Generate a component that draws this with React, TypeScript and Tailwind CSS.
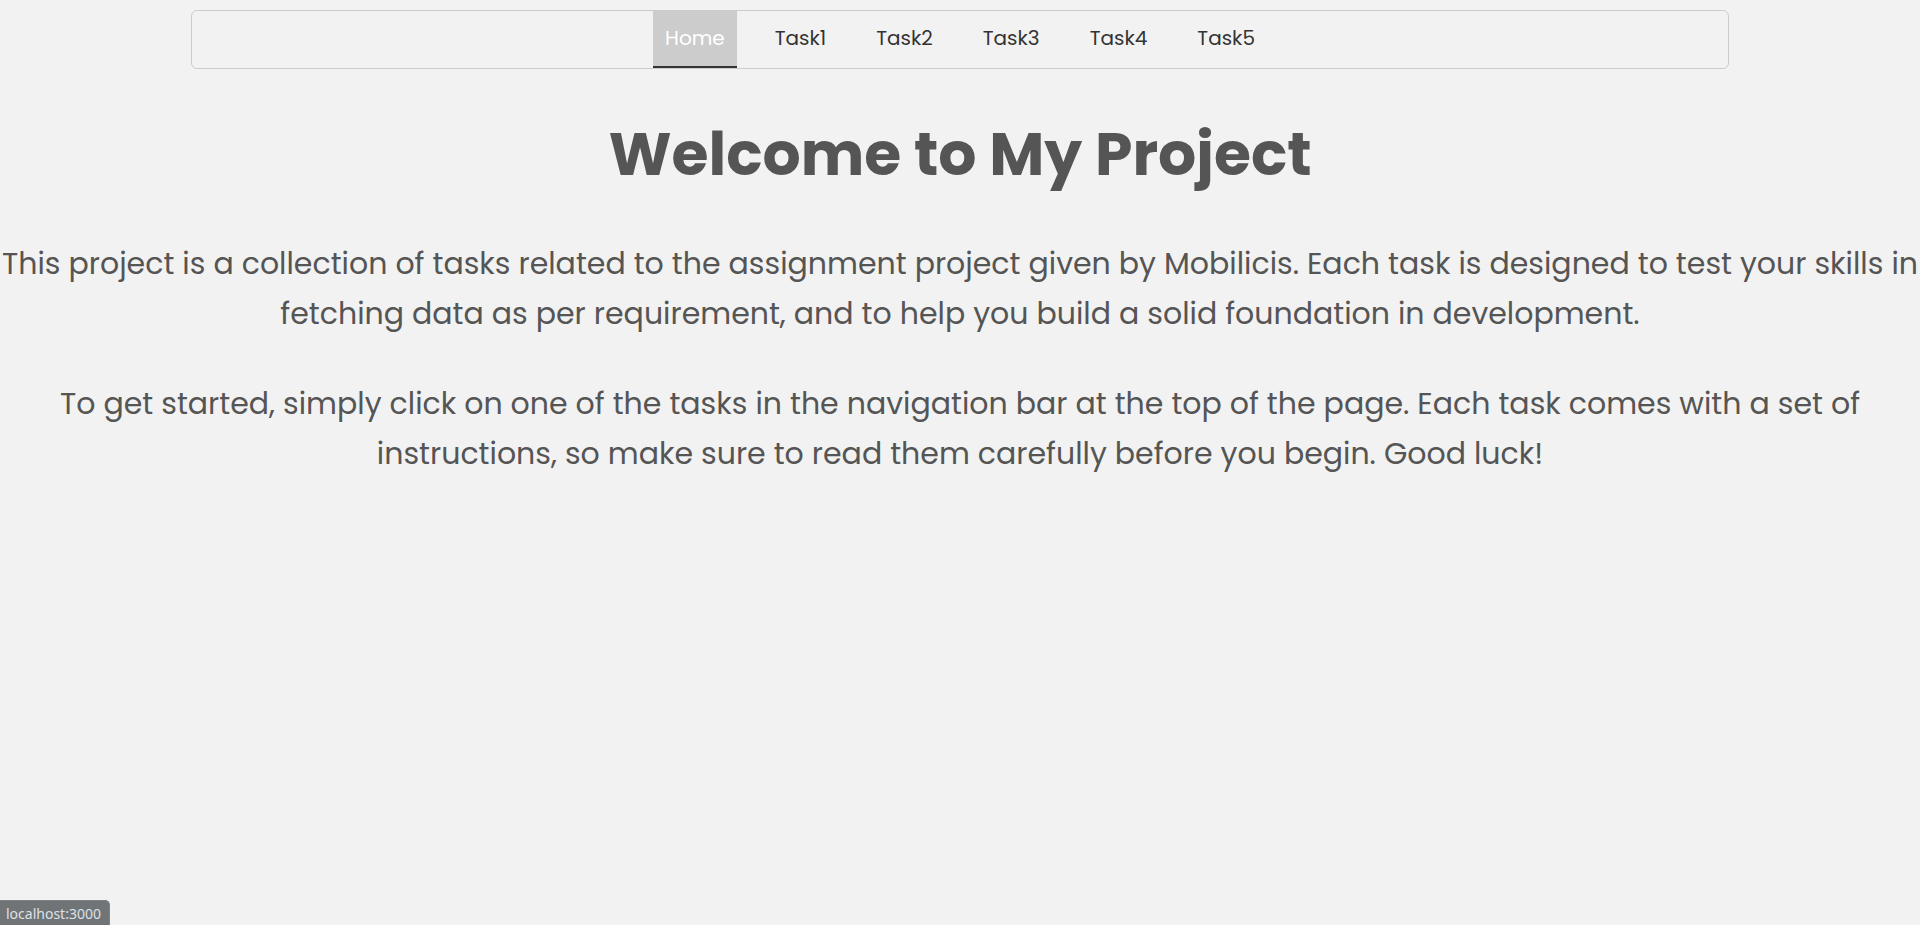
const links = ["Task1", "Task2", "Task3", "Task4", "Task5"];

export default function App() {
  return (
    <div className="flex min-h-screen flex-col bg-[#f2f2f2] font-[Poppins,Inter,sans-serif] text-[#555]">
      <nav className="mx-auto mt-[10px] flex w-[calc(80%+2px)] justify-center gap-[26px] rounded-md border border-[#ccc] text-[20px] leading-[30px] text-[#333]">
        <a href="#home" className="border-b-2 border-[#333] bg-[#ccc] px-3 pt-[12px] pb-[13px] text-white">
          Home
        </a>
        {links.map((label) => (
          <a key={label} href={`#${label.toLowerCase()}`} className="px-3 pt-[12px] pb-[13px]">
            {label}
          </a>
        ))}
      </nav>
      <main className="flex-1 text-center">
        <h1 className="mt-[40px] text-[60px] leading-[90px] font-bold">Welcome to My Project</h1>
        <p className="mt-[40px] text-[30px] leading-[50px]">
          This project is a collection of tasks related to the assignment project given by Mobilicis. Each task is designed to test your skills in
          fetching data as per requirement, and to help you build a solid foundation in development.
        </p>
        <p className="mt-[40px] text-[30px] leading-[50px]">
          To get started, simply click on one of the tasks in the navigation bar at the top of the page. Each task comes with a set of
          instructions, so make sure to read them carefully before you begin. Good luck!
        </p>
      </main>
      <div className="fixed bottom-0 left-0 rounded-tr-[5px] border-t border-r border-[#7f8285] bg-[#707477] pt-[4px] pr-[8px] pb-[2px] pl-[6px] font-['Noto_Sans',sans-serif] text-[14px] leading-[18px] text-[#dee1e6]">
        localhost:3000
      </div>
    </div>
  );
}
